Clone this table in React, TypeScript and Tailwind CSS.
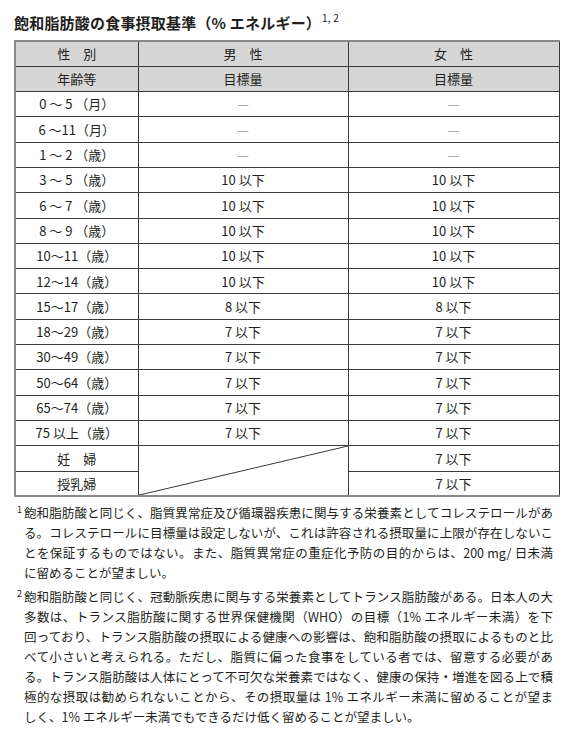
const FONT = '[font-family:"Noto_Sans_CJK_JP","Noto_Sans",sans-serif]'

const ROWS: [string, string, string][] = [
  ['0 ～ 5 （月）', '—', '—'],
  ['6 ～11（月）', '—', '—'],
  ['1 ～ 2 （歳）', '—', '—'],
  ['3 ～ 5 （歳）', '10 以下', '10 以下'],
  ['6 ～ 7 （歳）', '10 以下', '10 以下'],
  ['8 ～ 9 （歳）', '10 以下', '10 以下'],
  ['10～11（歳）', '10 以下', '10 以下'],
  ['12～14（歳）', '10 以下', '10 以下'],
  ['15～17（歳）', '8 以下', '8 以下'],
  ['18～29（歳）', '7 以下', '7 以下'],
  ['30～49（歳）', '7 以下', '7 以下'],
  ['50～64（歳）', '7 以下', '7 以下'],
  ['65～74（歳）', '7 以下', '7 以下'],
  ['75 以上（歳）', '7 以下', '7 以下'],
]

const NOTE1 = [
  '飽和脂肪酸と同じく、脂質異常症及び循環器疾患に関与する栄養素としてコレステロールがあ',
  'る。コレステロールに目標量は設定しないが、これは許容される摂取量に上限が存在しないこ',
  'とを保証するものではない。また、脂質異常症の重症化予防の目的からは、200 mg/ 日未満',
  'に留めることが望ましい。',
]

const NOTE2 = [
  '飽和脂肪酸と同じく、冠動脈疾患に関与する栄養素としてトランス脂肪酸がある。日本人の大',
  '多数は、トランス脂肪酸に関する世界保健機関（WHO）の目標（1% エネルギー未満）を下',
  '回っており、トランス脂肪酸の摂取による健康への影響は、飽和脂肪酸の摂取によるものと比',
  'べて小さいと考えられる。ただし、脂質に偏った食事をしている者では、留意する必要があ',
  'る。トランス脂肪酸は人体にとって不可欠な栄養素ではなく、健康の保持・増進を図る上で積',
  '極的な摂取は勧められないことから、その摂取量は 1% エネルギー未満に留めることが望ま',
  'しく、1% エネルギー未満でもできるだけ低く留めることが望ましい。',
]

const cell = 'border border-[#3a3a3a] h-[25.3px] p-0 text-center align-middle font-normal'
const head = cell + ' bg-[#d6d6d6]'

function Note({ n, lines }: { n: string; lines: string[] }) {
  return (
    <div className="flex">
      <span className="w-[10px] shrink-0 pt-[1px] pl-[3px] text-[9px] leading-[12px]">{n}</span>
      <div className="w-[529px] text-[12.5px] leading-[20px]">
        {lines.map((l, i) => (
          <div
            key={i}
            className={i < lines.length - 1 ? 'text-justify [text-align-last:justify]' : ''}
          >
            {l}
          </div>
        ))}
      </div>
    </div>
  )
}

export default function App() {
  return (
    <div className={`${FONT} w-[573px] min-h-[731px] bg-white pl-[14px] pt-[11px] text-[#231f20]`}>
      <h1 className="flex items-start h-[29px] text-[15px] font-bold leading-[24px] tracking-[0.2px]">
        飽和脂肪酸の食事摂取基準（% エネルギー）
        <span className="ml-[1px] text-[10px] leading-[14px] font-normal">1, 2</span>
      </h1>

      <table className="table-fixed border-collapse w-[544px] text-[13px] border-t-2 border-l-2 border-b-2 border-[#8a8a8a] [border-right:1px_solid_#3a3a3a]">
        <colgroup>
          <col className="w-[123px]" />
          <col className="w-[210px]" />
          <col className="w-[211px]" />
        </colgroup>
        <thead>
          <tr>
            <th className={head}>性　別</th>
            <th className={head}>男　性</th>
            <th className={head}>女　性</th>
          </tr>
          <tr>
            <th className={head}>年齢等</th>
            <th className={head}>目標量</th>
            <th className={head}>目標量</th>
          </tr>
        </thead>
        <tbody>
          {ROWS.map(([age, m, f]) => (
            <tr key={age}>
              <td className={cell}>{age}</td>
              <td className={cell + (m === '—' ? ' text-[#9a9a9a]' : '')}>{m}</td>
              <td className={cell + (f === '—' ? ' text-[#9a9a9a]' : '')}>{f}</td>
            </tr>
          ))}
          <tr>
            <td className={cell}>妊　婦</td>
            <td rowSpan={2} className={cell + ' relative'}>
              <svg className="absolute inset-0 h-full w-full" viewBox="0 0 100 100" preserveAspectRatio="none">
                <line x1="0" y1="100" x2="100" y2="0" stroke="#3a3a3a" strokeWidth="1" vectorEffect="non-scaling-stroke" />
              </svg>
            </td>
            <td className={cell}>7 以下</td>
          </tr>
          <tr>
            <td className={cell}>授乳婦</td>
            <td className={cell}>7 以下</td>
          </tr>
        </tbody>
      </table>

      <div className="mt-[6px] flex flex-col gap-[4px]">
        <Note n="1" lines={NOTE1} />
        <Note n="2" lines={NOTE2} />
      </div>
    </div>
  )
}
